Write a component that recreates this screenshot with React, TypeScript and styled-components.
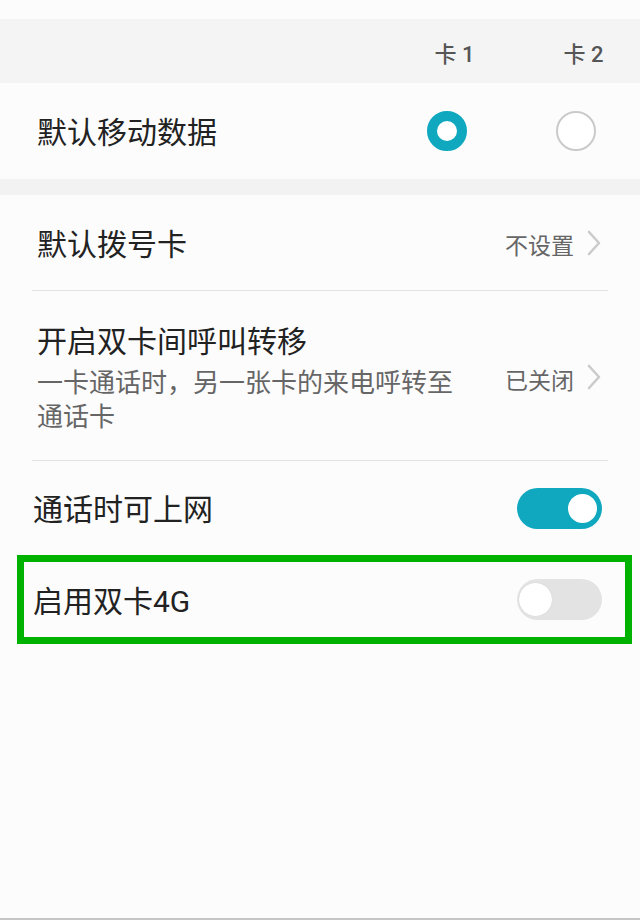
import React from 'react';
import styled, { createGlobalStyle } from 'styled-components';

const GlobalStyle = createGlobalStyle`
    body {
        margin: 0;
        background: #fcfcfc;
        font-family: Roboto, "Noto Sans CJK SC", sans-serif;
        color: #222;
    }
`;

export default function App() {
    return (<Page>
        <GlobalStyle />
        <SimHeader>
            <span />
            <SimLabel>卡 1</SimLabel>
            <SimLabel>卡 2</SimLabel>
        </SimHeader>
        <RadioRow>
            <Title>默认移动数据</Title>
            <Radio checked />
            <Radio checked={false} />
        </RadioRow>
        <SectionGap />
        <List>
            <Item indent={5} height={96} divider>
                <TextBlock>
                    <Title>默认拨号卡</Title>
                </TextBlock>
                <Value>不设置</Value>
                <Chevron />
            </Item>
            <Item indent={5} divider padTop={29} padBottom={26}>
                <TextBlock>
                    <Title>开启双卡间呼叫转移</Title>
                    <Subtitle>一卡通话时，另一张卡的来电呼转至通话卡</Subtitle>
                </TextBlock>
                <Value>已关闭</Value>
                <Chevron />
            </Item>
            <Item indent={1} height={94}>
                <TextBlock>
                    <Title>通话时可上网</Title>
                </TextBlock>
                <Toggle on />
            </Item>
        </List>
        <Highlight>
            <HighlightRow>
                <TextBlock>
                    <Title>启用双卡4G</Title>
                </TextBlock>
                <Toggle on={false} />
            </HighlightRow>
        </Highlight>
    </Page>);
}

function Chevron() {
    return (<ChevronIcon width="16" height="28" viewBox="0 0 16 28">
        <polyline points="3,3 13,14 3,25" fill="none" stroke="#cbcbcb" strokeWidth="2.6" strokeLinecap="round" strokeLinejoin="round" />
    </ChevronIcon>);
}

const Page = styled.div`
    box-sizing: border-box;
    min-height: 920px;
    padding-top: 19px;
    background: #fcfcfc;
    border-bottom: 2px solid #c6c6c6;
    display: flex;
    flex-direction: column;
`;

const SimHeader = styled.div`
    height: 64px;
    background: #f4f4f4;
    display: grid;
    grid-template-columns: 1fr 80px 80px;
    column-gap: 49px;
    padding-right: 24px;
    align-items: center;
`;

const SimLabel = styled.div`
    font-size: 22px;
    font-weight: 500;
    color: #555;
    text-align: center;
    padding: 2px 0 0 15px;
    white-space: pre;
`;

const RadioRow = styled.div`
    height: 96px;
    display: grid;
    grid-template-columns: 1fr 80px 80px;
    column-gap: 49px;
    padding: 0 24px 0 37px;
    align-items: center;
    justify-items: start;
    & > :not(:first-child) {
        justify-self: center;
    }
`;

const Radio = styled.div<{ checked: boolean }>`
    box-sizing: border-box;
    width: 40px;
    height: 40px;
    border-radius: 50%;
    background: #fff;
    border: ${props => props.checked ? '10px solid #0fa8bf' : '2px solid #cacaca'};
`;

const SectionGap = styled.div`
    height: 16px;
    background: #f2f2f2;
`;

const List = styled.div`
    margin: 0 32px;
    display: flex;
    flex-direction: column;
`;

const Item = styled.div<{ indent: number; height?: number; divider?: boolean; padTop?: number; padBottom?: number }>`
    box-sizing: border-box;
    display: flex;
    align-items: center;
    height: ${props => props.height ? `${props.height}px` : 'auto'};
    padding: ${props => props.padTop || 0}px 6px ${props => props.padBottom || 0}px ${props => props.indent}px;
    border-bottom: ${props => props.divider ? '1px solid #e2e2e2' : 'none'};
`;

const TextBlock = styled.div`
    flex: 1;
    min-width: 0;
    display: flex;
    flex-direction: column;
`;

const Title = styled.div`
    font-size: 30px;
    line-height: 36px;
    padding-top: 4px;
    color: #222;
    white-space: nowrap;
`;

const Subtitle = styled.div`
    margin-top: 6px;
    max-width: 430px;
    font-size: 26px;
    line-height: 34px;
    color: #666;
`;

const Value = styled.div`
    font-size: 23px;
    color: #666;
    margin: 3px 12px 0 0;
`;

const ChevronIcon = styled.svg`
    display: block;
    flex-shrink: 0;
`;

const Toggle = styled.div<{ on: boolean }>`
    position: relative;
    flex-shrink: 0;
    width: 85px;
    height: 41px;
    border-radius: 21px;
    background: ${props => props.on ? '#0fa8bf' : '#e3e3e3'};
    &::after {
        content: '';
        position: absolute;
        top: ${props => props.on ? '6px' : '4px'};
        ${props => props.on ? 'right: 5px;' : 'left: 2px;'}
        width: ${props => props.on ? '29px' : '33px'};
        height: ${props => props.on ? '29px' : '33px'};
        border-radius: 50%;
        background: #fff;
        box-shadow: ${props => props.on ? 'none' : '0 0 1px rgba(0,0,0,0.15)'};
    }
`;

const Highlight = styled.div`
    box-sizing: border-box;
    margin: 0 8px 0 17px;
    border: 7px solid #00b200;
`;

const HighlightRow = styled.div`
    display: flex;
    align-items: center;
    height: 75px;
    padding: 0 23px 0 9px;
`;
